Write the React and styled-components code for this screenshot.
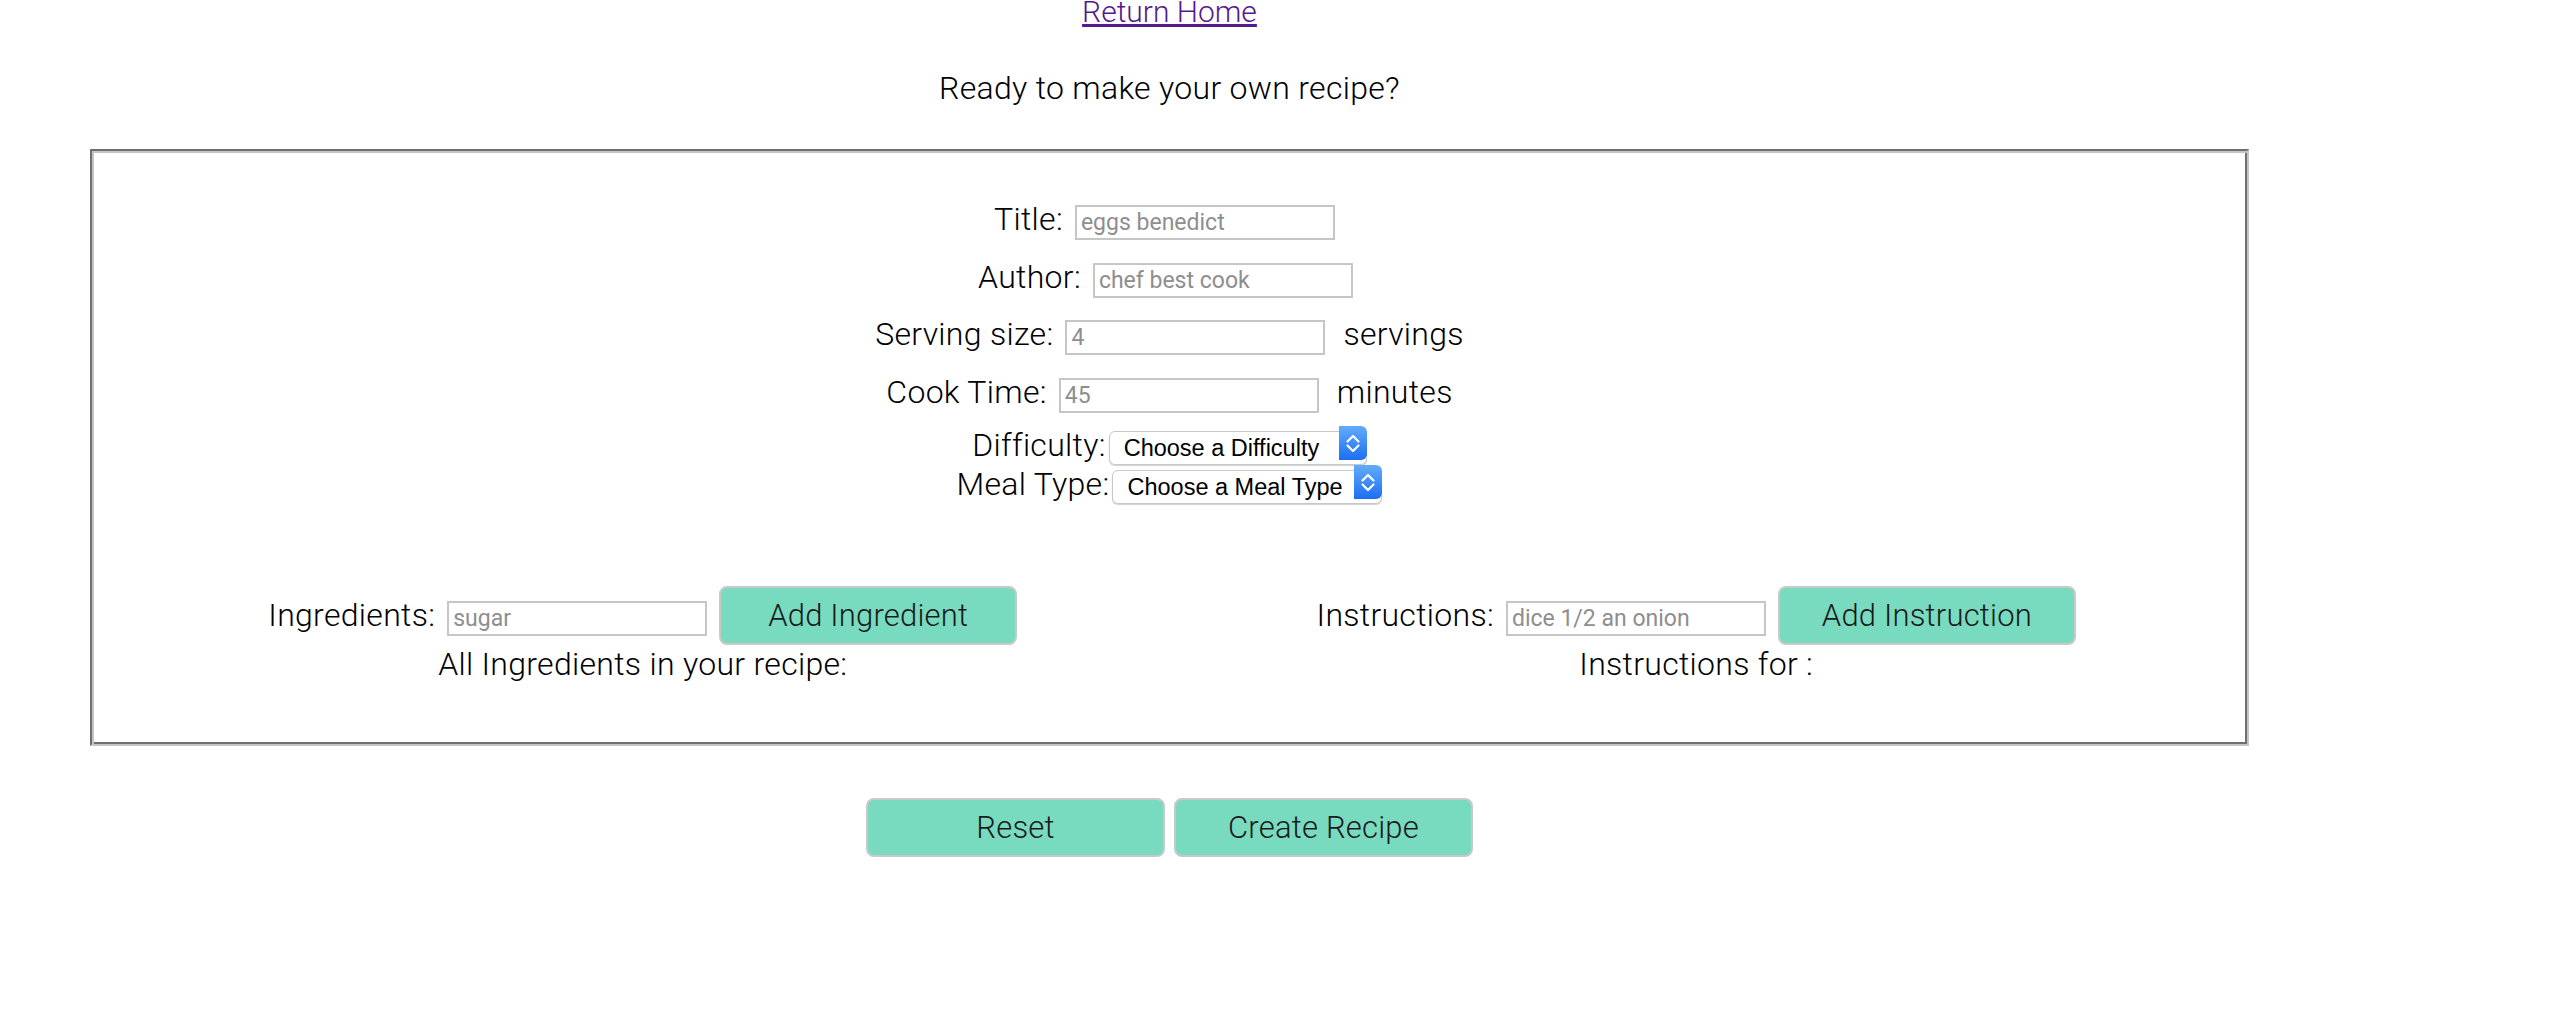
import React, { useState } from "react";
import styled, { createGlobalStyle } from "styled-components";

const GlobalStyle = createGlobalStyle`
  body {
    margin: 0;
    background: #fff;
    font-family: Roboto, "Noto Sans", sans-serif;
    font-weight: 300;
    font-size: 32px;
    letter-spacing: 0.3px;
    color: #000;
  }
`;

function Chevrons() {
  return (
    <svg width="28" height="34" viewBox="0 0 28 34">
      <polyline
        points="8.5,15.5 14,10 19.5,15.5"
        fill="none"
        stroke="#fff"
        strokeWidth="2.2"
        strokeLinecap="round"
        strokeLinejoin="round"
      />
      <polyline
        points="8.5,19.5 14,25 19.5,19.5"
        fill="none"
        stroke="#fff"
        strokeWidth="2.2"
        strokeLinecap="round"
        strokeLinejoin="round"
      />
    </svg>
  );
}

function NewRecipe() {
  const [ingredients, setIngredients] = useState([]);
  const [instructions, setInstructions] = useState([]);
  const [ingredient, setIngredient] = useState("");
  const [instruction, setInstruction] = useState("");

  const addIngredient = (e) => {
    e.preventDefault();
    if (ingredient !== "") {
      setIngredients([...ingredients, ingredient]);
      setIngredient("");
    }
  };

  const addInstruction = (e) => {
    e.preventDefault();
    if (instruction !== "") {
      setInstructions([...instructions, instruction]);
      setInstruction("");
    }
  };

  const reset = () => {
    setIngredients([]);
    setInstructions([]);
  };

  return (
    <Page>
      <Nav>
        <HomeLink href="#">Return Home</HomeLink>
      </Nav>
      <Lead>Ready to make your own recipe?</Lead>

      <FormBox onSubmit={(e) => e.preventDefault()}>
        <Fields>
          <Row $trail={10}>
            <Label>Title:</Label>
            <TextInput placeholder="eggs benedict" />
          </Row>
          <Row $trail={8}>
            <Label>Author:</Label>
            <TextInput placeholder="chef best cook" />
          </Row>
          <Row>
            <Label>Serving size:</Label>
            <TextInput placeholder="4" />
            <Unit>servings</Unit>
          </Row>
          <Row>
            <Label>Cook Time:</Label>
            <TextInput placeholder="45" />
            <Unit>minutes</Unit>
          </Row>
        </Fields>

        <SelectGroup>
          <SelectRow>
            <Label>Difficulty:</Label>
            <SelectWrap $w={258}>
              <Select defaultValue="">
                <option value="">Choose a Difficulty</option>
                <option>Easy</option>
                <option>Medium</option>
                <option>Hard</option>
              </Select>
              <Arrow>
                <Chevrons />
              </Arrow>
            </SelectWrap>
          </SelectRow>
          <SelectRow>
            <Label>Meal Type:</Label>
            <SelectWrap $w={270}>
              <Select defaultValue="">
                <option value="">Choose a Meal Type</option>
                <option>Breakfast</option>
                <option>Lunch</option>
                <option>Dinner</option>
              </Select>
              <Arrow>
                <Chevrons />
              </Arrow>
            </SelectWrap>
          </SelectRow>
        </SelectGroup>

        <Columns>
          <Column>
            <Row>
              <Label>Ingredients:</Label>
              <TextInput
                placeholder="sugar"
                value={ingredient}
                onChange={(e) => setIngredient(e.currentTarget.value)}
              />
              <GreenButton onClick={addIngredient}>Add Ingredient</GreenButton>
            </Row>
            <Caption>All Ingredients in your recipe:</Caption>
            {ingredients.map((item, i) => (
              <Caption key={i}>{item}</Caption>
            ))}
          </Column>
          <Column>
            <Row>
              <Label>Instructions:</Label>
              <TextInput
                placeholder="dice 1/2 an onion"
                value={instruction}
                onChange={(e) => setInstruction(e.currentTarget.value)}
              />
              <GreenButton onClick={addInstruction}>Add Instruction</GreenButton>
            </Row>
            <Caption>Instructions for :</Caption>
            {instructions.map((item, i) => (
              <Caption key={i}>{item}</Caption>
            ))}
          </Column>
        </Columns>
      </FormBox>

      <Actions>
        <GreenButton $w={299} onClick={reset}>
          Reset
        </GreenButton>
        <GreenButton $w={299}>Create Recipe</GreenButton>
      </Actions>
    </Page>
  );
}

export default function App() {
  return (
    <>
      <GlobalStyle />
      <NewRecipe />
    </>
  );
}

const Page = styled.div`
  width: 2339px;
  text-align: center;
`;

const Nav = styled.div`
  margin-top: -8px;
  line-height: 38px;
`;

const HomeLink = styled.a`
  font-size: 30px;
  letter-spacing: 0;
  color: #551a8b;
  text-decoration: underline;
`;

const Lead = styled.p`
  margin: 38px 0 42px;
  line-height: 38px;
`;

const FormBox = styled.form`
  margin: 0 90px;
  padding: 52px 24px 61px;
  border-style: solid;
  border-width: 2px;
  border-color: #6f6f6f #c4c4c4 #c4c4c4 #6f6f6f;
  box-shadow: inset 2px 2px 0 #c4c4c4, inset -2px -2px 0 #6f6f6f;
`;

const Fields = styled.div`
  display: flex;
  flex-direction: column;
  align-items: center;
  gap: 20.5px;
`;

const Row = styled.div`
  display: flex;
  align-items: baseline;
  justify-content: center;
  gap: 12px;
  padding-right: ${(p) => p.$trail || 0}px;
`;

const Label = styled.label`
  line-height: 32px;
  white-space: nowrap;
`;

const TextInput = styled.input`
  width: 260px;
  height: 35px;
  box-sizing: border-box;
  margin: 0;
  padding: 0 4px;
  border: 2px solid #c6c6c6;
  border-radius: 0;
  font-family: Roboto, sans-serif;
  font-weight: 400;
  font-size: 23px;
  letter-spacing: 0;
  color: #000;
  outline: none;
  &::placeholder {
    color: #8e8e8e;
  }
`;

const Unit = styled.span`
  margin-left: 6px;
  line-height: 32px;
`;

const SelectGroup = styled.div`
  display: flex;
  flex-direction: column;
  align-items: center;
  gap: 4px;
  margin-top: 13px;
`;

const SelectRow = styled.div`
  display: flex;
  align-items: baseline;
  justify-content: center;
  gap: 3px;
`;

const SelectWrap = styled.span`
  position: relative;
  display: inline-block;
  width: ${(p) => p.$w}px;
  height: 34px;
`;

const Select = styled.select`
  appearance: none;
  width: 100%;
  height: 34px;
  margin: 0;
  padding: 0 0 0 14px;
  border: 1px solid #c8c8c8;
  border-radius: 6px;
  background: #fff;
  box-shadow: 0 1px 1px rgba(0, 0, 0, 0.18);
  font-family: "Liberation Sans", Arial, sans-serif;
  font-size: 23.5px;
  letter-spacing: 0;
  color: #000;
  outline: none;
`;

const Arrow = styled.span`
  position: absolute;
  top: 0;
  right: 0;
  width: 28px;
  height: 34px;
  border-radius: 0 6px 6px 0;
  background: linear-gradient(#63abfb, #1c6ff1);
  pointer-events: none;
  display: flex;
  align-items: center;
  justify-content: center;
`;

const Columns = styled.div`
  display: grid;
  grid-template-columns: 1fr 1fr;
  margin-top: 86px;
`;

const Column = styled.div`
  display: flex;
  flex-direction: column;
  align-items: center;
`;

const Caption = styled.p`
  margin: 0;
`;

const GreenButton = styled.button`
  width: ${(p) => p.$w || 298}px;
  height: 59px;
  box-sizing: border-box;
  margin: 0;
  padding: 0;
  background: #78dbc0;
  border: 2px solid #c9c9c9;
  border-radius: 8px;
  font-family: Roboto, sans-serif;
  font-weight: 300;
  font-size: 31px;
  letter-spacing: 0.2px;
  color: #1a1a1a;
  cursor: pointer;
  :hover {
    opacity: 0.9;
  }
`;

const Actions = styled.div`
  display: flex;
  justify-content: center;
  gap: 9px;
  margin-top: 52px;
`;
